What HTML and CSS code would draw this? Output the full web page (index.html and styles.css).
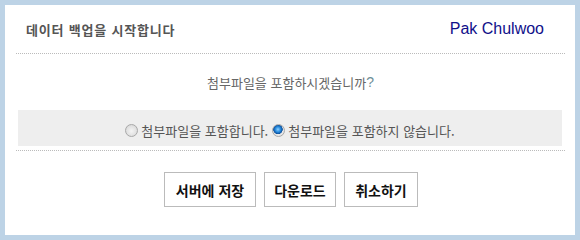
FILE: index.html
```html
<!DOCTYPE html>
<html lang="ko">
<head>
<meta charset="utf-8">
<title>데이터 백업</title>
<link rel="stylesheet" href="styles.css">
</head>
<body>
<div class="panel">
  <div class="header">
    <span class="title">데이터 백업을 시작합니다</span>
    <span class="user">Pak Chulwoo</span>
  </div>
  <div class="question">첨부파일을 포함하시겠습니까<span class="qmark">?</span></div>
  <div class="options-wrap">
    <div class="options">
      <label class="opt"><input type="radio" name="attach" class="radio"><span>첨부파일을 포함합니다.</span></label>
      <label class="opt"><input type="radio" name="attach" class="radio" checked><span>첨부파일을 포함하지 않습니다.</span></label>
    </div>
  </div>
  <div class="actions">
    <button class="btn btn-save">서버에 저장</button>
    <button class="btn btn-down">다운로드</button>
    <button class="btn btn-cancel">취소하기</button>
  </div>
</div>
</body>
</html>
```

FILE: styles.css
```css
html {
  margin: 0;
  padding: 0;
  overflow: hidden;
  background: #bdd3e6;
}
body {
  margin: 0;
  padding: 5px;
  width: 580px;
  height: 100vh;
  box-sizing: border-box;
  overflow: hidden;
  background: #bdd3e6;
  font-family: "Noto Sans CJK KR", "Noto Sans", sans-serif;
}
.panel {
  background: #ffffff;
  height: 100%;
  padding: 0 10px 0 11px;
  box-sizing: border-box;
  overflow: hidden;
}
.header {
  height: 49px;
  box-sizing: border-box;
  border-bottom: 1px dotted #bbbbbb;
  display: flex;
  align-items: center;
  justify-content: space-between;
  padding: 0 21px 0 10px;
}
.title {
  font-size: 13px;
  font-weight: bold;
  letter-spacing: 0.8px;
  color: #555555;
}
.user {
  font-family: "Liberation Sans", Arial, sans-serif;
  font-size: 16px;
  color: #10108a;
}
.question {
  height: 56px;
  display: flex;
  align-items: center;
  justify-content: center;
  font-size: 13px;
  color: #666666;
}
.qmark {
  color: #6f8f98;
  font-family: "Liberation Sans", Arial, sans-serif;
  font-size: 14px;
}
.options-wrap {
  padding: 0 3px 4px 2px;
  border-bottom: 1px dotted #bbbbbb;
}
.options {
  height: 36px;
  background: #eeeeee;
  display: flex;
  align-items: center;
  justify-content: center;
  gap: 4px;
  padding-top: 4px;
  box-sizing: border-box;
  font-size: 13px;
  color: #555555;
}
.opt {
  display: flex;
  align-items: center;
  gap: 3px;
}
.radio {
  appearance: none;
  -webkit-appearance: none;
  margin: 0;
  width: 13px;
  height: 13px;
  border-radius: 50%;
  border: 1px solid #a8a8a8;
  box-sizing: border-box;
  background: radial-gradient(circle at 50% 55%, #f4f4f4 0, #e2e2e2 55%, #cfcfcf 100%);
}
.radio:checked {
  background:
    radial-gradient(circle at 45% 40%, #8fd0ff 0, #2a8ee0 28%, #0b4f9c 50%, transparent 56%),
    radial-gradient(circle, #f6f6f6 0, #e4e4e4 70%, #cccccc 100%);
}
.actions {
  display: flex;
  justify-content: center;
  gap: 8px;
  padding-top: 21px;
  padding-left: 1px;
}
.btn {
  height: 35px;
  border: 1px solid #bbbbbb;
  background: #ffffff;
  font-family: "Noto Sans CJK KR", "Noto Sans", sans-serif;
  font-size: 14px;
  font-weight: bold;
  color: #111111;
  padding: 0;
  margin: 0;
}
.btn-save { width: 92px; }
.btn-down { width: 72px; }
.btn-cancel { width: 74px; }
```
